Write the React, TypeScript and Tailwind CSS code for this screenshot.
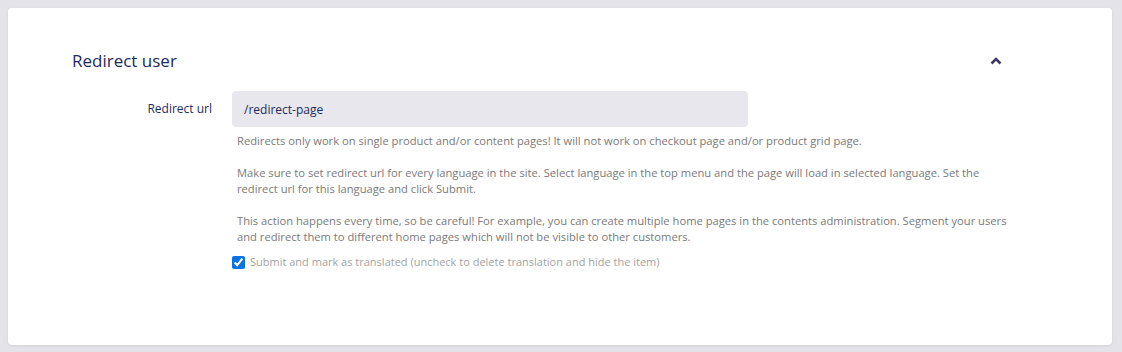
import { useState } from 'react';

export default function App() {
  const [open] = useState(true);
  const [translated, setTranslated] = useState(true);

  return (
    <div className="h-[352px] bg-[#e4e3e9] pl-2 pr-[10px] pt-2 font-['Open_Sans',sans-serif]">
      <div className="h-[337px] rounded bg-white shadow-[0_1px_3px_rgba(0,0,0,0.08)]">
        {/* Header */}
        <div className="flex items-center justify-between pl-16 pr-[110px] pt-[41px]">
          <h2 className="text-[17px] leading-6 text-[#1d2b5c]">Redirect user</h2>
          <svg className="h-3 w-3 text-[#3e3a5f]" viewBox="0 0 12 12" fill="none" stroke="currentColor">
            <path d="M1.5 8.5L6 4l4.5 4.5" strokeWidth={2.6} strokeLinejoin="miter" />
          </svg>
        </div>

        {open && (
          <div className="mt-[18px] flex pl-16">
            <label className="w-[140px] shrink-0 pt-[9px] text-right text-[12px] leading-[18px] text-[#1d2b5c]">
              Redirect url
            </label>
            <div className="ml-5 w-[780px]">
              <input
                className="h-9 w-[516px] rounded bg-[#e8e7ed] px-3 text-[12px] text-[#1d2b5c] outline-none"
                defaultValue="/redirect-page"
              />
              <div className="mt-[6px] pl-[5px] text-[11.2px] leading-4 text-[#7a7a7a]">
                <p>
                  Redirects only work on single product and/or content pages! It will not work on checkout page and/or
                  product grid page.
                </p>
                <p className="mt-4">
                  Make sure to set redirect url for every language in the site. Select language in the top menu and the
                  page will load in selected language. Set the redirect url for this language and click Submit.
                </p>
                <p className="mt-4">
                  This action happens every time, so be careful! For example, you can create multiple home pages in the
                  contents administration. Segment your users and redirect them to different home pages which will not
                  be visible to other customers.
                </p>
              </div>
              <label className="mt-[9px] flex items-center gap-[5px] text-[11px] leading-4 text-[#a3a3a3]">
                <input
                  type="checkbox"
                  className="m-0 h-[13px] w-[13px] accent-[#0b74e5]"
                  checked={translated}
                  onChange={(e) => setTranslated(e.target.checked)}
                />
                Submit and mark as translated (uncheck to delete translation and hide the item)
              </label>
            </div>
          </div>
        )}
      </div>
    </div>
  );
}
